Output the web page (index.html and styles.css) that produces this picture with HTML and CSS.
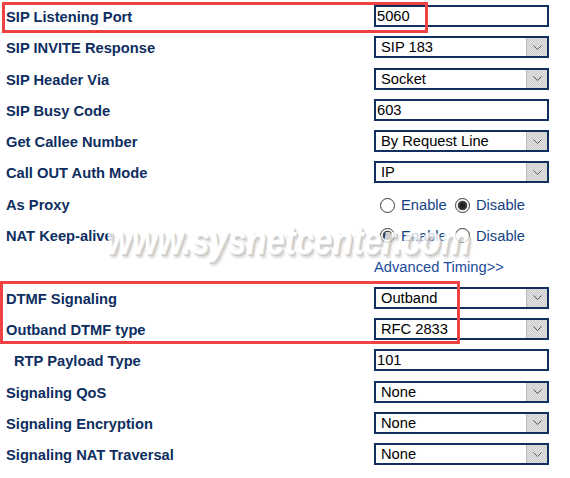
FILE: index.html
```html
<!DOCTYPE html>
<html>
<head>
<meta charset="utf-8">
<link rel="stylesheet" href="styles.css">
</head>
<body>
<div class="page">
  <div class="form">
    <div class="row"><div class="label">SIP Listening Port</div><div class="ctl"><input class="input" value="5060"></div></div>
    <div class="row"><div class="label">SIP INVITE Response</div><div class="ctl"><div class="select"><span class="val">SIP 183</span><span class="btn"><svg width="9" height="5" viewBox="0 0 9 5"><polyline points="0.5,0.5 4.5,4.5 8.5,0.5" fill="none" stroke="#555" stroke-width="1"/></svg></span></div></div></div>
    <div class="row"><div class="label">SIP Header Via</div><div class="ctl"><div class="select"><span class="val">Socket</span><span class="btn"><svg width="9" height="5" viewBox="0 0 9 5"><polyline points="0.5,0.5 4.5,4.5 8.5,0.5" fill="none" stroke="#555" stroke-width="1"/></svg></span></div></div></div>
    <div class="row"><div class="label">SIP Busy Code</div><div class="ctl"><input class="input" value="603"></div></div>
    <div class="row"><div class="label">Get Callee Number</div><div class="ctl"><div class="select"><span class="val">By Request Line</span><span class="btn"><svg width="9" height="5" viewBox="0 0 9 5"><polyline points="0.5,0.5 4.5,4.5 8.5,0.5" fill="none" stroke="#555" stroke-width="1"/></svg></span></div></div></div>
    <div class="row"><div class="label">Call OUT Auth Mode</div><div class="ctl"><div class="select"><span class="val">IP</span><span class="btn"><svg width="9" height="5" viewBox="0 0 9 5"><polyline points="0.5,0.5 4.5,4.5 8.5,0.5" fill="none" stroke="#555" stroke-width="1"/></svg></span></div></div></div>
    <div class="row"><div class="label">As Proxy</div><div class="ctl radios radios-a"><span class="opt"><span class="dot"></span>Enable</span><span class="opt"><span class="dot on"></span>Disable</span></div></div>
    <div class="row"><div class="label">NAT Keep-alive</div><div class="ctl radios"><span class="opt"><span class="dot on"></span>Enable</span><span class="opt"><span class="dot"></span>Disable</span></div></div>
    <div class="row"><div class="label"></div><div class="ctl link">Advanced Timing&gt;&gt;</div></div>
    <div class="row"><div class="label">DTMF Signaling</div><div class="ctl"><div class="select"><span class="val">Outband</span><span class="btn"><svg width="9" height="5" viewBox="0 0 9 5"><polyline points="0.5,0.5 4.5,4.5 8.5,0.5" fill="none" stroke="#555" stroke-width="1"/></svg></span></div></div></div>
    <div class="row"><div class="label">Outband DTMF type</div><div class="ctl"><div class="select"><span class="val">RFC 2833</span><span class="btn"><svg width="9" height="5" viewBox="0 0 9 5"><polyline points="0.5,0.5 4.5,4.5 8.5,0.5" fill="none" stroke="#555" stroke-width="1"/></svg></span></div></div></div>
    <div class="row"><div class="label indent">RTP Payload Type</div><div class="ctl"><input class="input" value="101"></div></div>
    <div class="row"><div class="label">Signaling QoS</div><div class="ctl"><div class="select"><span class="val">None</span><span class="btn"><svg width="9" height="5" viewBox="0 0 9 5"><polyline points="0.5,0.5 4.5,4.5 8.5,0.5" fill="none" stroke="#555" stroke-width="1"/></svg></span></div></div></div>
    <div class="row"><div class="label">Signaling Encryption</div><div class="ctl"><div class="select"><span class="val">None</span><span class="btn"><svg width="9" height="5" viewBox="0 0 9 5"><polyline points="0.5,0.5 4.5,4.5 8.5,0.5" fill="none" stroke="#555" stroke-width="1"/></svg></span></div></div></div>
    <div class="row"><div class="label">Signaling NAT Traversal</div><div class="ctl"><div class="select"><span class="val">None</span><span class="btn"><svg width="9" height="5" viewBox="0 0 9 5"><polyline points="0.5,0.5 4.5,4.5 8.5,0.5" fill="none" stroke="#555" stroke-width="1"/></svg></span></div></div></div>
  </div>
  <div class="wm">www.sysnetcenter.com</div>
  <div class="mark mark1"></div>
  <div class="mark mark2"></div>
</div>
</body>
</html>
```
FILE: styles.css
```css
* { box-sizing: border-box; }
body { margin: 0; background: #fff; font-family: "Liberation Sans", Arial, sans-serif; }
.page { position: relative; width: 570px; height: 478px; overflow: hidden; }
.form { display: flex; flex-direction: column; }
.row { display: flex; height: 31.3px; flex: none; }
.label {
  width: 374px; padding-left: 6px; margin-top: 5px; padding-top: 1px;
  line-height: 22px; font-weight: bold; font-size: 14.7px; color: #0e2d60;
  white-space: nowrap;
}
.label.indent { padding-left: 14px; }
.ctl { width: 175px; height: 22px; margin-top: 5px; flex: none; }
.input {
  display: block; margin: 0; width: 175px; height: 22px;
  border: 2px solid #12305f; background: #fff; outline: none;
  font: 14.7px "Liberation Sans", Arial, sans-serif; color: #000;
  padding: 0 0 0 1px;
}
.select { display: flex; height: 22px; border: 2px solid #12305f; background: #fff; }
.select .val { flex: 1; padding-left: 5px; line-height: 18px; font-size: 14.7px; color: #000; white-space: nowrap; }
.select .btn {
  width: 21px; display: flex; align-items: center; justify-content: center;
  border-left: 1px solid #b9b9b9;
  background: repeating-conic-gradient(#cdcdcd 0 25%, #e2e2e2 0 50%) 0 0 / 2px 2px;
}
.radios { display: flex; align-items: center; padding-left: 6px; padding-top: 1px; }
.radios-a { padding-top: 3px; }
.opt { display: flex; align-items: center; font-size: 14.7px; color: #123f82; white-space: nowrap; }
.opt:first-child { width: 75px; }
.dot {
  width: 15px; height: 15px; border-radius: 50%; border: 1px solid #3a3a3a;
  background: #fff; margin-right: 6px; flex: none;
}
.dot.on { background: radial-gradient(circle at 50% 50%, #1c1c1c 0, #2a2a2a 3px, #555 4.5px, #fff 5.2px); }
.link { font-size: 14.7px; color: #1b4c98; line-height: 22px; padding-top: 1px; white-space: nowrap; }
.wm {
  position: absolute; left: 106px; top: 227px;
  font: italic bold 33px/33px "Liberation Sans", Arial, sans-serif;
  color: #fff; white-space: nowrap; pointer-events: none;
  transform: scaleY(1.25); transform-origin: left bottom;
  text-shadow: 1px 1px 0 #dadada, 2px 2px 1px #b4b4b4, 3px 3px 2px #d2d2d2;
  opacity: 0.78;
}
.mark { position: absolute; border: 3px solid #ef4242; }
.mark1 { left: 2px; top: 2px; width: 426px; height: 31px; }
.mark2 { left: 0; top: 281px; width: 460px; height: 63px; }
```
